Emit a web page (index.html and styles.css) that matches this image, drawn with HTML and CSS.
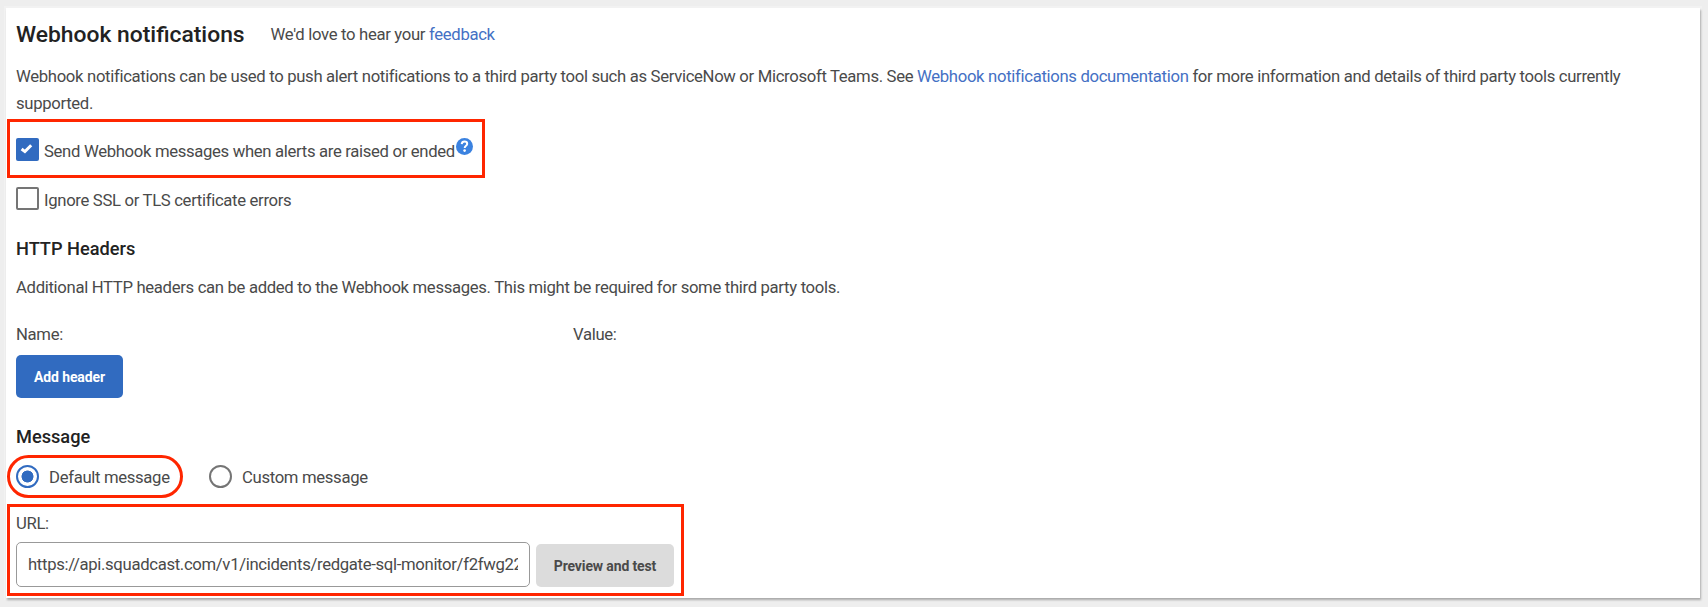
FILE: index.html
```
<!DOCTYPE html>
<html lang="en">
<head>
<meta charset="utf-8">
<title>Webhook notifications</title>
<link rel="stylesheet" href="styles.css">
</head>
<body>
<main class="panel">
  <header class="head">
    <h1 class="title">Webhook notifications</h1>
    <p class="feedback">We'd love to hear your <a href="#">feedback</a></p>
  </header>
  <p class="intro">Webhook notifications can be used to push alert notifications to a third party tool such as ServiceNow or Microsoft Teams. See <a href="#">Webhook notifications documentation</a> for more information and details of third party tools currently<br>supported.</p>
  <div class="mark mark-send">
    <span class="check checked"><svg viewBox="0 0 23 23"><path d="M5.6 11 8.9 13.6 15.2 7.2" fill="none" stroke="#fff" stroke-width="3"/></svg></span>
    <span class="send-text">Send Webhook messages when alerts are raised or ended</span>
    <svg class="help" viewBox="0 0 17 17"><circle cx="8.5" cy="8.5" r="8.5" fill="#3b82e0"/><path d="M5.7 6.2C5.9 4.3 7.1 3.6 8.5 3.6s2.7.8 2.7 2.3c0 1.9-2.5 1.9-2.5 4" fill="none" stroke="#fff" stroke-width="2"/><circle cx="8.6" cy="12.6" r="1.3" fill="#fff"/></svg>
  </div>
  <div class="ignore"><span class="check"></span><span class="ignore-text">Ignore SSL or TLS certificate errors</span></div>
  <h2 class="section headers-title">HTTP Headers</h2>
  <p class="additional">Additional HTTP headers can be added to the Webhook messages. This might be required for some third party tools.</p>
  <div class="columns"><span>Name:</span><span>Value:</span></div>
  <button class="btn primary">Add header</button>
  <h2 class="section message-title">Message</h2>
  <div class="radios">
    <div class="mark mark-radio"><span class="radio selected"></span><span class="default-text">Default message</span></div>
    <span class="radio"></span><span class="custom-text">Custom message</span>
  </div>
  <div class="mark mark-url">
    <div class="url-label">URL:</div>
    <div class="url-row">
      <div class="field"><span class="field-text">https://api.squadcast.com/v1/incidents/redgate-sql-monitor/f2fwg22</span></div>
      <button class="btn secondary">Preview and test</button>
    </div>
  </div>
</main>
</body>
</html>
```
FILE: styles.css
```
* { box-sizing: border-box; }
body { margin: 0; padding: 8px 8px 9px 6px; height: 607px; overflow: hidden; background: #eeeeee; font: 16.7px/27px Roboto, "Liberation Sans", sans-serif; letter-spacing: -.325px; color: #4a4a4a; }
.panel { height: 590px; padding-left: 10px; background: #fff; box-shadow: 1px 2px 2px rgba(0,0,0,.3), 0 0 0 2px #f2f2f2; white-space: nowrap; }
h1, h2, p { margin: 0; }
a { color: #4470c4; text-decoration: none; }
.head { display: flex; align-items: flex-start; gap: 26px; height: 55px; padding-top: 13px; }
.title { font-size: 22.85px; font-weight: 500; letter-spacing: 0; color: #222; }
.intro { height: 56px; }
.mark { border: 3.5px solid #ff2600; margin-left: -9px; }
.mark-send { display: flex; width: 478px; height: 59px; padding: 16px 0 0 6px; }
.check { flex: none; width: 23px; height: 23px; border: 2px solid #757575; border-radius: 2px; background: #fff; }
.checked { border: 0; background: #316bc0; }
.checked svg { display: block; width: 23px; height: 23px; }
.send-text, .ignore-text { margin-left: 5px; }
.help { width: 17px; height: 17px; margin-left: 1px; }
.ignore { display: flex; height: 52px; padding-top: 9px; }
.section { font-size: 18.2px; font-weight: 500; letter-spacing: 0; color: #222; }
.headers-title { height: 44px; padding-top: 5px; }
.additional { height: 47px; }
.columns { display: grid; grid-template-columns: 557px auto; height: 34px; }
.btn { display: block; border: 0; border-radius: 5px; padding: 0; height: 43px; font: 700 14px/42px Roboto, "Liberation Sans", sans-serif; letter-spacing: -.13px; }
.primary { width: 107px; color: #fff; background: #316bc0; }
.message-title { height: 57px; padding-top: 25px; }
.radios { display: flex; align-items: center; height: 43px; }
.mark-radio { display: flex; align-items: center; width: 176px; height: 43px; padding-left: 6px; margin-right: 26px; border-radius: 22px; }
.radio { flex: none; width: 23px; height: 23px; border: 2px solid #757575; border-radius: 50%; }
.selected { border-color: #316bc0; background: radial-gradient(circle, #316bc0 5.7px, transparent 6.3px); }
.default-text, .custom-text { margin-left: 10px; padding-top: 1px; }
.mark-url { width: 677px; height: 92px; margin-top: 6px; padding: 3px 0 0 6px; }
.url-label { height: 32px; }
.url-row { display: flex; align-items: flex-end; gap: 6px; height: 45px; }
.field { width: 514px; height: 45px; padding: 8px 11px; border: 1.5px solid #999; border-radius: 5px; }
.field-text { display: block; overflow: hidden; }
.secondary { width: 138px; color: #4a4a4a; background: #dcdcdc; }
```
